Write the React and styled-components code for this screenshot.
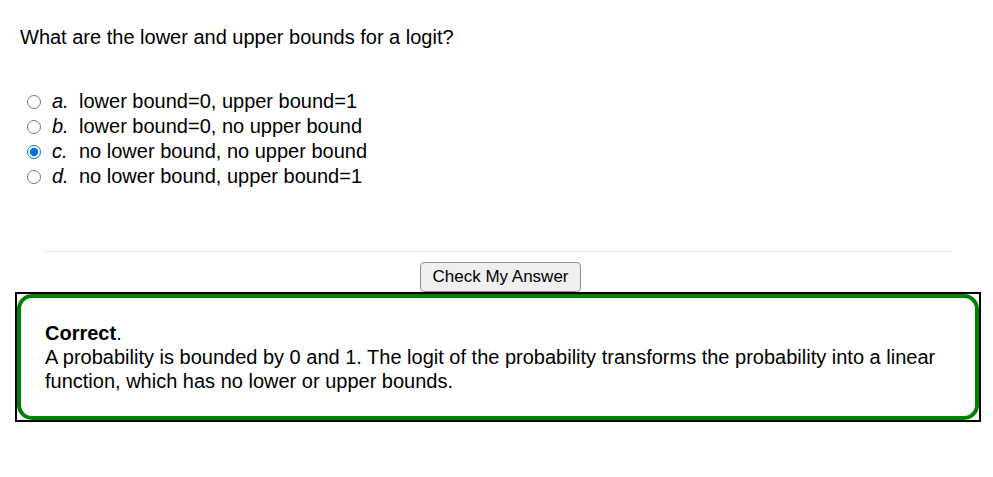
import styled, { createGlobalStyle } from "styled-components"

const Global = createGlobalStyle`
    body{
        margin: 0;
        background: #fff;
        font-family: "Liberation Sans", Arial, sans-serif;
        color: #000;
    }
`

const Page = styled.div`
    width: 993px;
    height: 477px;
    padding-top: 26px;
    box-sizing: border-box;
`

const Question = styled.p`
    margin: 0 0 0 20px;
    font-size: 20px;
    line-height: 23px;
`

const Options = styled.div`
    margin: 40px 0 0 25px;
    display: flex;
    flex-direction: column;
`

const Option = styled.label`
    display: flex;
    align-items: center;
    height: 25px;
    font-size: 20px;
    input{
        margin: 0 11px 0 2px;
        width: 14px;
        height: 14px;
        accent-color: #0b6fdf;
    }
    em{
        width: 27px;
    }
`

const Rule = styled.hr`
    margin: 62px 0 0 43px;
    width: 908px;
    border: none;
    border-top: 1px solid #e6e6e6;
`

const ButtonRow = styled.div`
    display: flex;
    justify-content: center;
    margin-top: 10px;
    padding-left: 8px;
`

const Button = styled.button`
    font-family: "Liberation Sans", Arial, sans-serif;
    font-size: 17px;
    width: 161px;
    height: 30px;
    background: #efefef;
    border: 1px solid #8f8f8f;
    border-radius: 4px;
    color: #000;
`

const Feedback = styled.div`
    margin: 0 0 0 15px;
    width: 966px;
    height: 130px;
    box-sizing: border-box;
    border: 2px solid #000;
`

const FeedbackInner = styled.div`
    height: 100%;
    box-sizing: border-box;
    border: 4px solid #008000;
    border-radius: 15px;
    padding: 23px 24px;
    font-size: 20px;
    line-height: 24px;
    strong{
        font-weight: bold;
    }
    p{
        margin: 0;
    }
`

const options = [
    ["a.", "lower bound=0, upper bound=1"],
    ["b.", "lower bound=0, no upper bound"],
    ["c.", "no lower bound, no upper bound"],
    ["d.", "no lower bound, upper bound=1"],
]

export default function App() {
    return (
        <Page>
            <Global />
            <Question>What are the lower and upper bounds for a logit?</Question>
            <Options>
                {options.map(([letter, text]) => (
                    <Option key={letter}>
                        <input type="radio" name="q" defaultChecked={letter === "c."} />
                        <em>{letter}</em>
                        <span>{text}</span>
                    </Option>
                ))}
            </Options>
            <Rule />
            <ButtonRow>
                <Button>Check My Answer</Button>
            </ButtonRow>
            <Feedback>
                <FeedbackInner>
                    <p><strong>Correct</strong>.</p>
                    <p>A probability is bounded by 0 and 1. The logit of the probability transforms the probability into a linear function, which has no lower or upper bounds.</p>
                </FeedbackInner>
            </Feedback>
        </Page>
    )
}
